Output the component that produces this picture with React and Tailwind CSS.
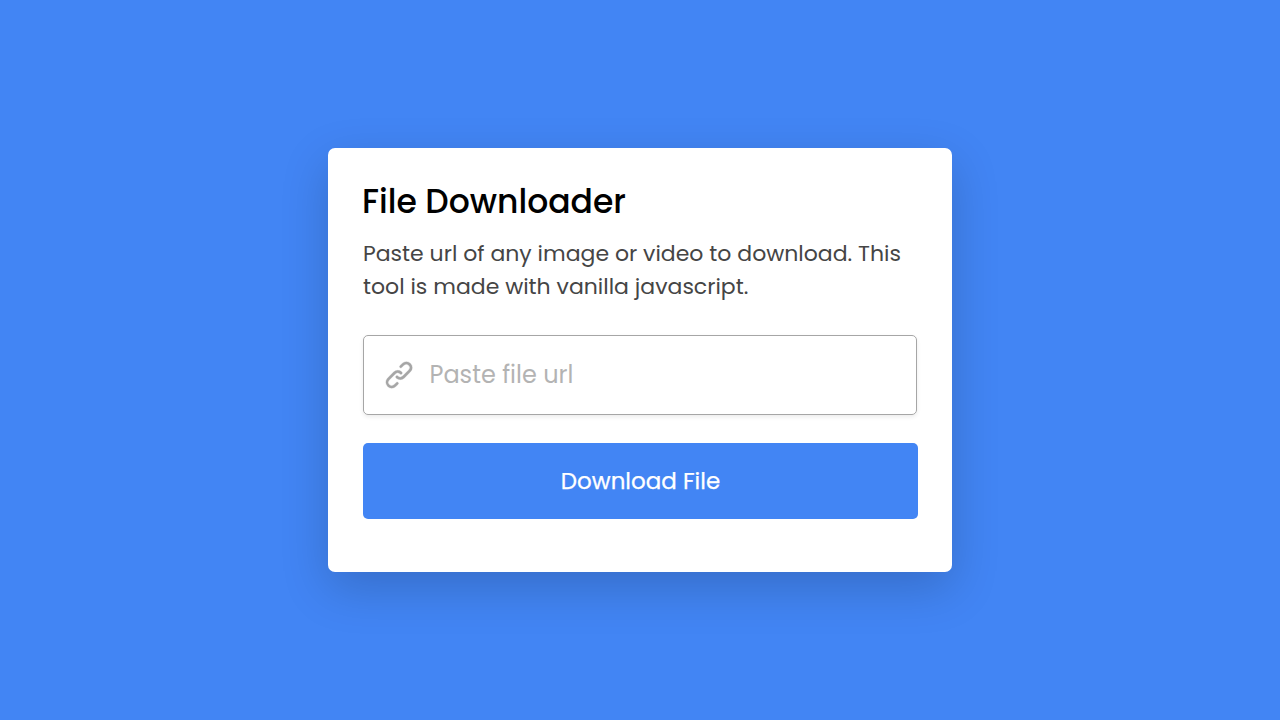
function LinkIcon() {
  return (
    <svg viewBox="0 0 24 24" className="h-[32px] w-[32px] shrink-0 fill-[#a6a6a6] stroke-[#a6a6a6] [stroke-width:0.2]" aria-hidden="true">
      <path d="M10,17.55,8.23,19.27a2.47,2.47,0,0,1-3.5-3.5l4.54-4.55a2.46,2.46,0,0,1,3.39-.09l.12.1a1,1,0,0,0,1.4-1.43A2.75,2.75,0,0,0,14,9.59a4.46,4.46,0,0,0-6.09.22L3.31,14.36a4.48,4.48,0,0,0,6.33,6.33L11.37,19A1,1,0,0,0,10,17.55ZM20.69,3.31a4.49,4.49,0,0,0-6.33,0L12.63,5A1,1,0,0,0,14,6.45l1.73-1.72a2.47,2.47,0,0,1,3.5,3.5l-4.54,4.55a2.46,2.46,0,0,1-3.39.09l-.12-.1a1,1,0,0,0-1.4,1.43,2.75,2.75,0,0,0,.23.21,4.47,4.47,0,0,0,6.09-.22l4.55-4.55A4.49,4.49,0,0,0,20.69,3.31Z" />
    </svg>
  );
}

export default function App() {
  return (
    <main className="flex h-screen items-center justify-center bg-[#4285f4] font-['Poppins','Inter',sans-serif]">
      <section className="flex h-[424px] w-[624px] flex-col rounded-[7px] bg-white px-[35px] pt-[28px] shadow-[0_16px_48px_rgba(0,0,0,0.18)]">
        <h1 className="-ml-px text-[33px] leading-[51px] font-medium whitespace-nowrap text-black">File Downloader</h1>
        <p className="mt-[10px] text-[22px] leading-[33px] whitespace-nowrap text-[#454545]">
          Paste url of any image or video to download. This
          <br />
          tool is made with vanilla javascript.
        </p>
        <label className="mt-[32px] flex h-[80px] w-[554px] items-center rounded-[5px] border border-[#a6a6a6] pl-[19px] shadow-[0_2px_4px_rgba(0,0,0,0.08)]">
          <LinkIcon />
          <input
            type="url"
            placeholder="Paste file url"
            className="ml-[14.5px] w-[400px] text-[24px] leading-[36px] outline-none placeholder:text-[#b3b3b3]"
          />
        </label>
        <button className="mt-[28px] h-[76px] w-[555px] rounded-[5px] bg-[#4285f4] text-[23px] text-white [-webkit-text-stroke:0.25px_white]">
          Download File
        </button>
      </section>
    </main>
  );
}
